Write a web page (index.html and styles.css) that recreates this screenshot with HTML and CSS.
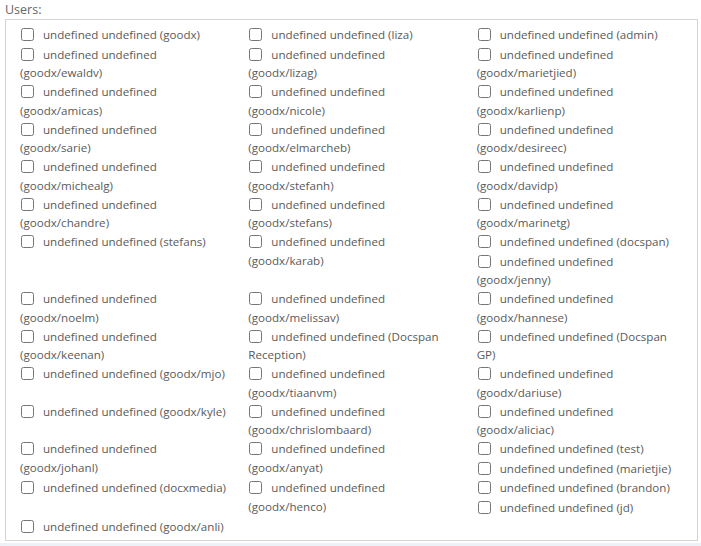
FILE: index.html
```html
<!DOCTYPE html>
<html lang="en">
<head>
  <meta charset="UTF-8" />
  <title>Users</title>
  <link rel="stylesheet" href="styles.css">
</head>
<body>

  <div class="panel">
    <div class="field-label">Users:</div>

    <div class="user-box">
      <label class="user"><input type="checkbox">undefined undefined (goodx)</label>
      <label class="user"><input type="checkbox">undefined undefined (liza)</label>
      <label class="user"><input type="checkbox">undefined undefined (admin)</label>
      <label class="user"><input type="checkbox">undefined undefined (goodx/ewaldv)</label>
      <label class="user"><input type="checkbox">undefined undefined (goodx/lizag)</label>
      <label class="user"><input type="checkbox">undefined undefined (goodx/marietjied)</label>
      <label class="user"><input type="checkbox">undefined undefined (goodx/amicas)</label>
      <label class="user"><input type="checkbox">undefined undefined (goodx/nicole)</label>
      <label class="user"><input type="checkbox">undefined undefined (goodx/karlienp)</label>
      <label class="user"><input type="checkbox">undefined undefined (goodx/sarie)</label>
      <label class="user"><input type="checkbox">undefined undefined (goodx/elmarcheb)</label>
      <label class="user"><input type="checkbox">undefined undefined (goodx/desireec)</label>
      <label class="user"><input type="checkbox">undefined undefined (goodx/michealg)</label>
      <label class="user"><input type="checkbox">undefined undefined (goodx/stefanh)</label>
      <label class="user"><input type="checkbox">undefined undefined (goodx/davidp)</label>
      <label class="user"><input type="checkbox">undefined undefined (goodx/chandre)</label>
      <label class="user"><input type="checkbox">undefined undefined (goodx/stefans)</label>
      <label class="user"><input type="checkbox">undefined undefined (goodx/marinetg)</label>
      <label class="user"><input type="checkbox">undefined undefined (stefans)</label>
      <label class="user"><input type="checkbox">undefined undefined (goodx/karab)</label>
      <label class="user"><input type="checkbox">undefined undefined (docspan)</label>
      <label class="user"><input type="checkbox">undefined undefined (goodx/jenny)</label>
      <label class="user"><input type="checkbox">undefined undefined (goodx/noelm)</label>
      <label class="user"><input type="checkbox">undefined undefined (goodx/melissav)</label>
      <label class="user"><input type="checkbox">undefined undefined (goodx/hannese)</label>
      <label class="user"><input type="checkbox">undefined undefined (goodx/keenan)</label>
      <label class="user"><input type="checkbox">undefined undefined (Docspan Reception)</label>
      <label class="user"><input type="checkbox">undefined undefined (Docspan GP)</label>
      <label class="user"><input type="checkbox">undefined undefined (goodx/mjo)</label>
      <label class="user"><input type="checkbox">undefined undefined (goodx/tiaanvm)</label>
      <label class="user"><input type="checkbox">undefined undefined (goodx/dariuse)</label>
      <label class="user"><input type="checkbox">undefined undefined (goodx/kyle)</label>
      <label class="user"><input type="checkbox">undefined undefined (goodx/chrislombaard)</label>
      <label class="user"><input type="checkbox">undefined undefined (goodx/aliciac)</label>
      <label class="user"><input type="checkbox">undefined undefined (goodx/johanl)</label>
      <label class="user"><input type="checkbox">undefined undefined (goodx/anyat)</label>
      <label class="user"><input type="checkbox">undefined undefined (test)</label>
      <label class="user"><input type="checkbox">undefined undefined (marietjie)</label>
      <label class="user"><input type="checkbox">undefined undefined (docxmedia)</label>
      <label class="user"><input type="checkbox">undefined undefined (goodx/henco)</label>
      <label class="user"><input type="checkbox">undefined undefined (brandon)</label>
      <label class="user"><input type="checkbox">undefined undefined (jd)</label>
      <label class="user"><input type="checkbox">undefined undefined (goodx/anli)</label>
    </div>
  </div>

</body>
</html>
```

FILE: styles.css
```css
* {
  box-sizing: border-box;
}

body {
  margin: 0;
  font-family: 'Open Sans', sans-serif;
  font-size: 11.6px;
  color: #5a5a5a;
  background-color: #edf2f8;
}

.panel {
  background: #fff;
  padding: 0 3px 2px 5px;
}

.field-label {
  font-size: 12.5px;
  line-height: 19px;
  color: #666;
}

.user-box {
  border: 1px solid #d4d4d4;
  padding: 6px 6px 2px 0;
  display: flow-root;
}

.user {
  float: left;
  width: 33.333%;
  padding: 0 7.5px 0 14px;
  line-height: 18.75px;
  min-height: 19.5px;
}

.user input {
  margin: 0 9px 0 1px;
  width: 13px;
  height: 13px;
  vertical-align: -2px;
}
```
